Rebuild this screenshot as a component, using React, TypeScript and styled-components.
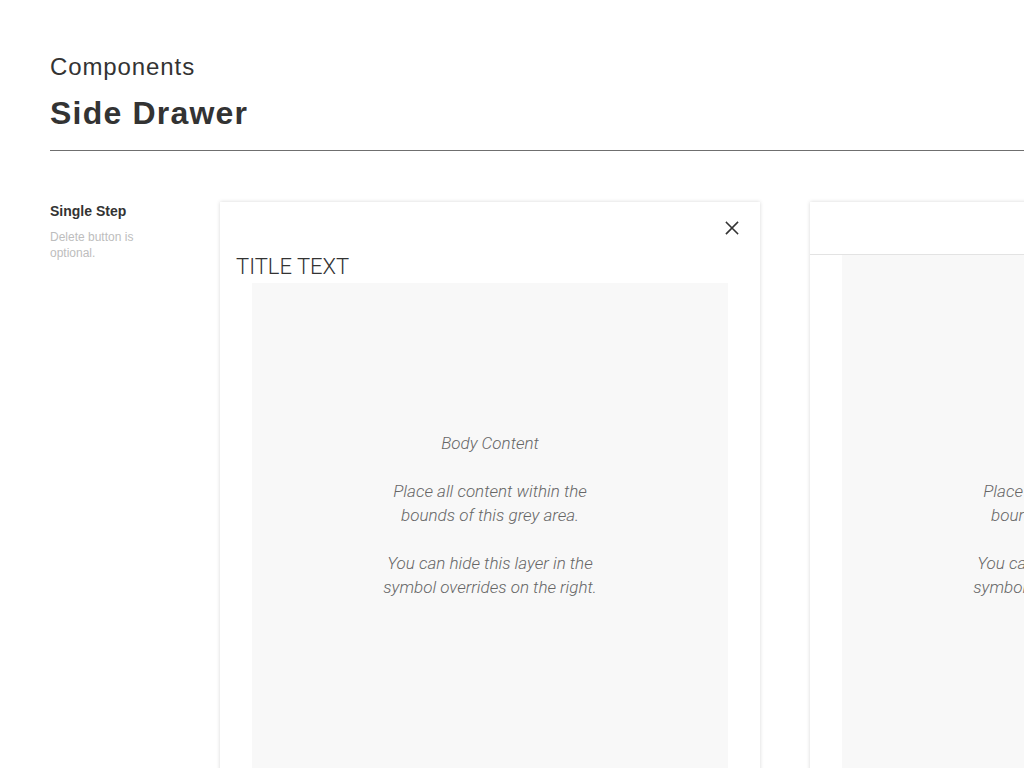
import React from "react";
import styled, { createGlobalStyle } from "styled-components";

const Global = createGlobalStyle`
  html, body { margin: 0; padding: 0; background: #fff; }
  body { overflow: hidden; width: 1024px; height: 768px; font-family: "Liberation Sans", Arial, sans-serif; }
`;

const Page = styled.div`
  width: 1024px;
  height: 768px;
  overflow: hidden;
  padding: 52px 0 0 50px;
  box-sizing: border-box;
`;

const Header = styled.header`
  border-bottom: 1px solid #6f6f6f;
  padding-bottom: 20px;
  width: 1100px;
`;

const Eyebrow = styled.h2`
  margin: 0;
  font-size: 24px;
  line-height: 30px;
  font-weight: 400;
  color: #333;
  letter-spacing: 0.9px;
`;

const Title = styled.h1`
  margin: 14px 0 0;
  font-size: 32px;
  line-height: 34px;
  font-weight: 700;
  color: #333;
  letter-spacing: 1.2px;
`;

const Section = styled.section`
  display: flex;
  margin-top: 51px;
  gap: 50px;
`;

const Aside = styled.div`
  width: 120px;
  flex-shrink: 0;
`;

const AsideTitle = styled.div`
  font-size: 14px;
  font-weight: 700;
  color: #333;
  line-height: 18px;
`;

const AsideNote = styled.div`
  margin-top: 9px;
  font-size: 12px;
  line-height: 16px;
  color: #bdbdbd;
`;

const Drawer = styled.div`
  width: 540px;
  height: 700px;
  flex-shrink: 0;
  background: #fff;
  box-shadow: 0 0 4px rgba(0, 0, 0, 0.16);
  display: flex;
  flex-direction: column;
`;

const CloseRow = styled.div`
  display: flex;
  justify-content: flex-end;
  padding: 19px 21px 0 0;
  color: #333;
`;

const DrawerTitle = styled.div`
  margin: 19px 0 3px 16px;
  font-family: Roboto, "Liberation Sans", sans-serif;
  font-weight: 300;
  font-size: 22px;
  line-height: 26px;
  color: #333;
`;

const StepHeader = styled.div`
  height: 52px;
  border-bottom: 1px solid #e3e3e3;
  flex-shrink: 0;
`;

const Body = styled.div<{ $pad: number }>`
  flex: 1;
  margin: 0 32px;
  background: #f8f8f8;
  padding-top: ${(p) => p.$pad}px;
  text-align: center;
  font-family: Roboto, "Liberation Sans", sans-serif;
  font-weight: 300;
  font-style: italic;
  font-size: 17px;
  line-height: 24px;
  color: #666;
`;

const Para = styled.p`
  margin: 0 0 24px;
`;

const CloseIcon = () => (
  <svg width="14" height="14" viewBox="0 0 14 14" fill="none" stroke="currentColor" strokeWidth="1.6" strokeLinecap="square">
    <path d="M1.5 1.5 L12.5 12.5 M12.5 1.5 L1.5 12.5" />
  </svg>
);

const BodyText = () => (
  <>
    <Para>Body Content</Para>
    <Para>
      Place all content within the
      <br />
      bounds of this grey area.
    </Para>
    <Para>
      You can hide this layer in the
      <br />
      symbol overrides on the right.
    </Para>
  </>
);

export default function App() {
  return (
    <>
      <Global />
      <Page>
        <Header>
          <Eyebrow>Components</Eyebrow>
          <Title>Side Drawer</Title>
        </Header>
        <Section>
          <Aside>
            <AsideTitle>Single Step</AsideTitle>
            <AsideNote>Delete button is optional.</AsideNote>
          </Aside>
          <Drawer>
            <CloseRow>
              <CloseIcon />
            </CloseRow>
            <DrawerTitle>TITLE TEXT</DrawerTitle>
            <Body $pad={148}>
              <BodyText />
            </Body>
          </Drawer>
          <Drawer>
            <StepHeader />
            <Body $pad={176}>
              <BodyText />
            </Body>
          </Drawer>
        </Section>
      </Page>
    </>
  );
}
